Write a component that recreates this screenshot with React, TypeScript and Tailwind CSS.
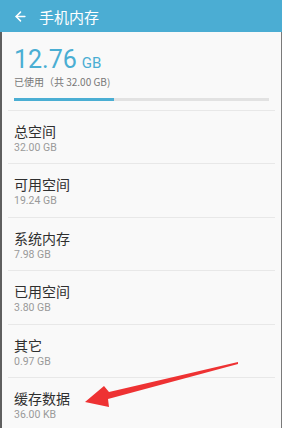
import { ArrowLeft } from "lucide-react";

const rows = [
  { title: "总空间", value: "32.00 GB" },
  { title: "可用空间", value: "19.24 GB" },
  { title: "系统内存", value: "7.98 GB" },
  { title: "已用空间", value: "3.80 GB" },
  { title: "其它", value: "0.97 GB" },
  { title: "缓存数据", value: "36.00 KB" },
];

export default function App() {
  return (
    <div
      className="relative w-[282px] h-[428px] overflow-hidden bg-[#f9f9f9]"
      style={{ fontFamily: '"Noto Sans CJK SC", Roboto, "Noto Sans", sans-serif' }}
    >
      <div className="h-[32px] bg-[#4badd3] flex items-center pl-[13px] text-white">
        <ArrowLeft size={15} strokeWidth={2.4} />
        <span className="ml-[11px] text-[15px] leading-none">手机内存</span>
      </div>

      <div className="h-[396px] border-l-2 border-r border-l-[#5f5f5f] border-r-[#7a7a7a]">
        <div className="pl-[12px] pr-[12px] pt-[14px]">
          <div className="flex items-baseline text-[#4aaed3]" style={{ fontFamily: "Roboto, sans-serif" }}>
            <span className="text-[25px] leading-[28px]">12.76</span>
            <span className="ml-[5px] text-[15px]">GB</span>
          </div>
          <div className="text-[10px] text-[#777] leading-[14px]">已使用（共 32.00 GB)</div>
          <div className="mt-[9px] h-[3px] w-[255px] bg-[#e2e2e2]">
            <div className="h-full w-[100px] bg-[#4aaed3]" />
          </div>
        </div>

        <div className="mt-[9px] mx-[6px]">
          {rows.map((r) => (
            <div key={r.title} className="border-t border-[#e8e8e8] h-[53.5px] pl-[6px] pt-[10px]">
              <div className="text-[14px] leading-[20px] text-[#2f2f2f]">{r.title}</div>
              <div
                className="text-[10.5px] leading-[14px] text-[#9a9a9a]"
                style={{ fontFamily: "Roboto, sans-serif" }}
              >
                {r.value}
              </div>
            </div>
          ))}
        </div>
      </div>

      <svg className="absolute left-0 top-0" width="282" height="428" viewBox="0 0 282 428">
        <polygon
          points="238,362 109,392 104,386 85,402 109,407 108,399 238,364"
          fill="#ee3233"
        />
      </svg>
    </div>
  );
}
